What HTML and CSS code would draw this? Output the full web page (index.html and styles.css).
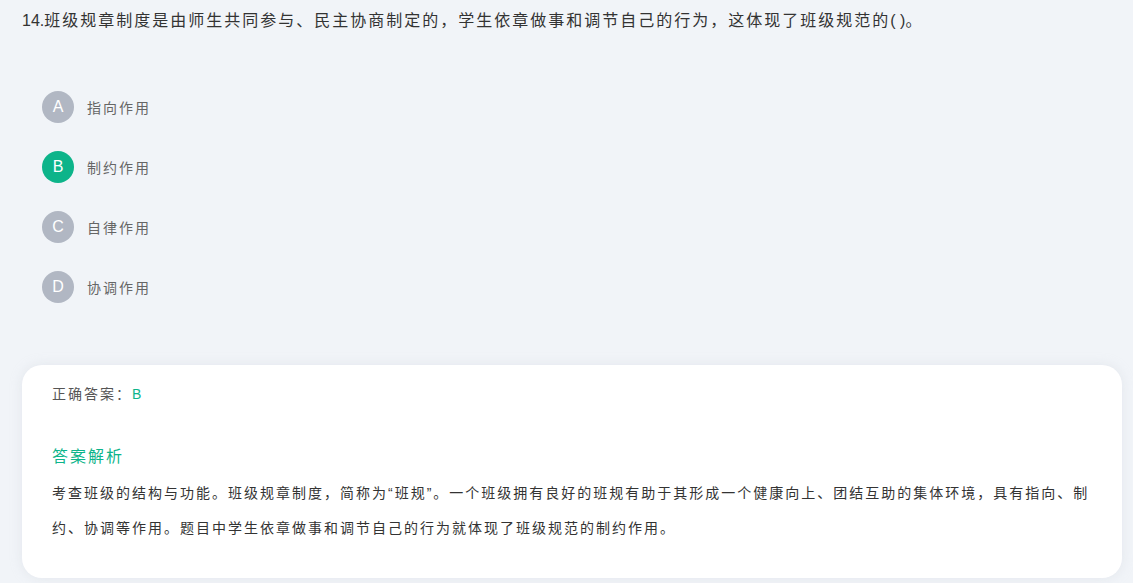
FILE: index.html
```html
<!DOCTYPE html>
<html lang="zh-CN">
<head>
<meta charset="utf-8">
<link rel="stylesheet" href="styles.css">
</head>
<body>
<div class="page">
  <div class="question"><span class="latin">14.</span>班级规章制度是由师生共同参与、民主协商制定的，学生依章做事和调节自己的行为，这体现了班级规范的<span class="latin">( )</span>。</div>
  <ul class="options">
    <li class="option"><span class="badge">A</span><span class="opt-text">指向作用</span></li>
    <li class="option"><span class="badge badge-correct">B</span><span class="opt-text">制约作用</span></li>
    <li class="option"><span class="badge">C</span><span class="opt-text">自律作用</span></li>
    <li class="option"><span class="badge">D</span><span class="opt-text">协调作用</span></li>
  </ul>
  <div class="card">
    <div class="answer">正确答案：<span class="answer-val">B</span></div>
    <div class="analysis-title">答案解析</div>
    <div class="analysis-body">考查班级的结构与功能。班级规章制度，简称为“班规”。一个班级拥有良好的班规有助于其形成一个健康向上、团结互助的集体环境，具有指向、制约、协调等作用。题目中学生依章做事和调节自己的行为就体现了班级规范的制约作用。</div>
  </div>
</div>
</body>
</html>
```
FILE: styles.css
```css
html, body {
  margin: 0;
  padding: 0;
  background: #f1f4f8;
}
body {
  font-family: "Liberation Sans", "Noto Sans CJK SC", sans-serif;
  color: #333;
  letter-spacing: 2px;
}
.latin {
  letter-spacing: 0;
}
.page {
  width: 1133px;
  height: 583px;
  overflow: hidden;
}
.question {
  font-size: 16px;
  line-height: 24px;
  padding: 9px 22px 0 22px;
  color: #333;
}
.options {
  list-style: none;
  margin: 58px 0 0 0;
  padding: 0 0 0 42px;
}
.option {
  display: flex;
  align-items: center;
  height: 32px;
  margin-bottom: 28px;
}
.badge {
  width: 32px;
  height: 32px;
  border-radius: 50%;
  background: #b1b7c3;
  color: #fff;
  font-size: 16px;
  letter-spacing: 0;
  display: flex;
  align-items: center;
  justify-content: center;
  flex-shrink: 0;
}
.badge-correct {
  background: #0db48a;
}
.opt-text {
  margin-left: 13px;
  font-size: 14px;
  color: #666;
}
.card {
  margin: 62px 11px 0 22px;
  background: #fff;
  border-radius: 20px;
  padding: 19px 28px 32px 30px;
  box-shadow: 0 0 12px rgba(200, 206, 216, 0.35);
}
.answer {
  font-size: 14px;
  line-height: 20px;
  color: #555;
}
.answer-val {
  color: #0db48a;
  letter-spacing: 0;
}
.analysis-title {
  margin-top: 41px;
  font-size: 16px;
  line-height: 24px;
  color: #0db48a;
}
.analysis-body {
  margin-top: 7px;
  font-size: 14px;
  line-height: 35px;
  color: #333;
}
```
